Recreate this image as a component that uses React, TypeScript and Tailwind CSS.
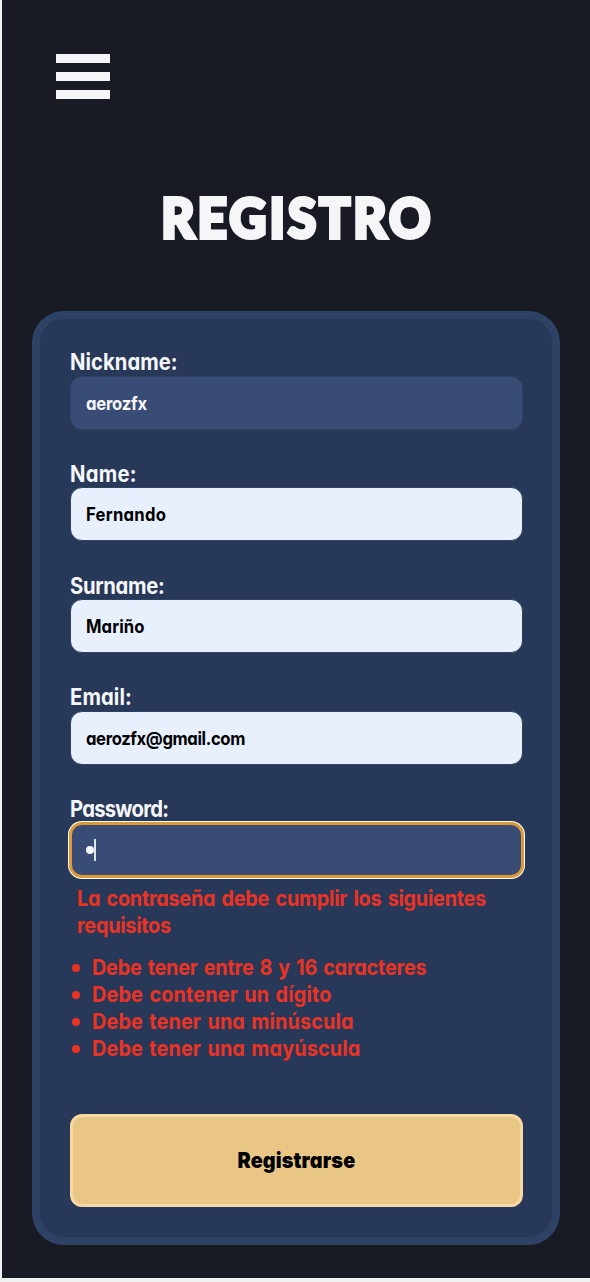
import React from "react";

const fields = [
  { label: "Nickname:", labelTracking: "tracking-[0.05px]", value: "aerozfx", tracking: "tracking-[-0.25px]", filled: false },
  { label: "Name:", labelTracking: "tracking-[0.3px]", value: "Fernando", tracking: "tracking-[0.3px]", filled: true },
  { label: "Surname:", labelTracking: "tracking-[-0.35px]", value: "Mariño", tracking: "tracking-[0.12px]", filled: true },
  { label: "Email:", labelTracking: "tracking-[0.1px]", value: "aerozfx@gmail.com", tracking: "tracking-[-0.42px]", filled: true },
];

const rules = [
  { text: "Debe tener entre 8 y 16 caracteres", tracking: "tracking-[-0.21px]" },
  { text: "Debe contener un dígito", tracking: "tracking-[0.18px]" },
  { text: "Debe tener una minúscula", tracking: "tracking-[0.16px]" },
  { text: "Debe tener una mayúscula", tracking: "tracking-[0.16px]" },
];

function Label({ tracking, children }: { tracking: string; children: React.ReactNode }) {
  return (
    <label
      className={
        "-mt-[0.5px] mb-[0.5px] block h-[27px] origin-left scale-x-90 whitespace-nowrap text-[22.5px] leading-[27px] font-bold text-[#f5f6f8] " +
        tracking
      }
    >
      {children}
    </label>
  );
}

export default function App() {
  return (
    <div className="h-[1282px] w-full border-b-4 border-l-2 border-[#f0f0f0] bg-[#181a24] pr-[30px] pl-[30px] font-['Inter',sans-serif] [font-feature-settings:'cv11']">
      <header className="pt-[54px] pl-6">
        <button aria-label="Menú" className="flex w-[54px] flex-col gap-[9px]">
          <span className="h-[9px] w-full bg-[#f5f6f8]" />
          <span className="h-[9px] w-full bg-[#f5f6f8]" />
          <span className="h-[9px] w-full bg-[#f5f6f8]" />
        </button>
      </header>
      <h1 className="mt-[84px] h-[68px] scale-x-[0.93] pl-[3px] text-center font-['Lato',sans-serif] text-[55px] leading-[68px] font-black tracking-[3.3px] text-[#f5f6f8] [-webkit-text-stroke:4px_#f5f6f8]">
        REGISTRO
      </h1>
      <form className="mt-[59.5px] flex h-[934.5px] w-[528px] flex-col rounded-[32px] border-8 border-[#2e4266] bg-[#283858] px-[29.5px] pt-[30px]">
        {fields.map((f) => (
          <div key={f.label} className="mb-[30.75px]">
            <Label tracking={f.labelTracking}>{f.label}</Label>
            <div
              className={
                "flex h-[54px] items-center rounded-xl border-[1.5px] border-[#2e4266] px-[15px] pt-[2px] text-[18.5px] font-bold " +
                f.tracking +
                (f.filled ? " bg-[#e8f0fe] text-black" : " bg-[#394c76] text-[#f5f6f8]")
              }
            >
              <span className="origin-left scale-x-90">{f.value}</span>
            </div>
          </div>
        ))}
        <Label tracking="tracking-[-0.85px]">Password:</Label>
        <div className="flex h-[54px] shrink-0 items-center rounded-xl bg-[#394c76] pl-[16.5px] ring-2 ring-white outline-[3px] -outline-offset-[2.5px] outline-[#dc9a36]">
          <span className="size-2 rounded-full bg-[#f5f6f8]" />
          <span className="h-[22px] w-[2px] bg-[#dfe3ea]" />
        </div>
        <p className="mt-[8.5px] ml-[7px] w-[470px] origin-left scale-x-90 text-[22px] leading-[27px] font-bold tracking-[-0.27px] [word-spacing:2.1px] text-[#eb3324]">
          La contraseña debe cumplir los siguientes requisitos
        </p>
        <ul className="mt-[15px] text-[22px] leading-[27px] font-bold [word-spacing:1.7px] text-[#eb3324]">
          {rules.map((r) => (
            <li key={r.text} className={"flex items-center whitespace-nowrap " + r.tracking}>
              <span className="mr-[12px] ml-[2.5px] size-[8px] shrink-0 rounded-full bg-[#eb3324]" />
              <span className="origin-left scale-x-90">{r.text}</span>
            </li>
          ))}
        </ul>
        <button className="mt-[51.5px] h-[93.5px] w-full shrink-0 rounded-xl border-[3px] border-[#f7d9a3] bg-[#e9c686] text-[22px] font-black tracking-[0.15px] text-black">
          <span className="inline-block scale-x-90">Registrarse</span>
        </button>
      </form>
    </div>
  );
}
